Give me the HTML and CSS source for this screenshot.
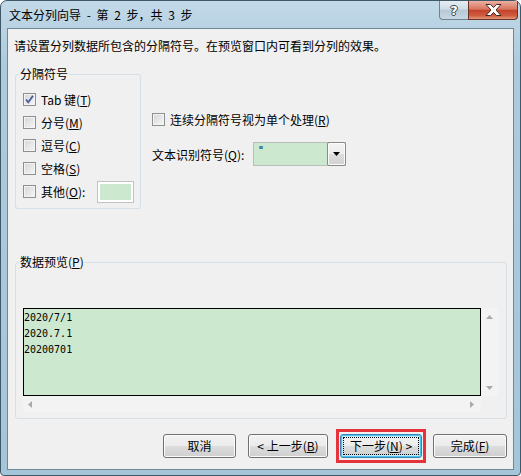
FILE: index.html
```html
<!DOCTYPE html>
<html lang="zh-CN">
<head>
<meta charset="utf-8">
<title>文本分列向导</title>
<link rel="stylesheet" href="styles.css">
</head>
<body>
<div class="window">
  <div class="titlebar">
    <span class="title">文本分列向导 - 第 2 步，共 3 步</span>
    <div class="caption-btns">
      <span class="cbtn help">?</span>
      <span class="cbtn close"><svg width="17" height="12" viewBox="0 0 17 12"><path d="M1 0.5h4.6l2.9 3 2.9-3H16l-5 5.5 5 5.5h-4.6L8.5 8.5l-2.9 3H1l5-5.5z" fill="#fff" stroke="#4a241c" stroke-width="1"/></svg></span>
    </div>
  </div>
  <div class="client">
    <p class="intro">请设置分列数据所包含的分隔符号。在预览窗口内可看到分列的效果。</p>
    <div class="top-row">
      <fieldset class="group delims">
        <legend>分隔符号</legend>
        <div class="checklist">
          <div class="row"><span class="cb"><svg width="11" height="11" viewBox="0 0 11 11"><path d="M2 5.5l2.3 2.8L9 1.8" fill="none" stroke="#4a5d9c" stroke-width="1.9"/></svg></span><span>Tab 键(<u>T</u>)</span></div>
          <div class="row"><span class="cb"></span><span>分号(<u>M</u>)</span></div>
          <div class="row"><span class="cb"></span><span>逗号(<u>C</u>)</span></div>
          <div class="row"><span class="cb"></span><span>空格(<u>S</u>)</span></div>
          <div class="row"><span class="cb"></span><span>其他(<u>O</u>):</span><span class="other-input"></span></div>
        </div>
      </fieldset>
      <div class="options">
        <div class="row consec"><span class="cb"></span><span>连续分隔符号视为单个处理(<u>R</u>)</span></div>
        <div class="qualifier">
          <span class="qlabel">文本识别符号(<u>Q</u>):</span>
          <div class="combo">
            <span class="combo-val">"</span>
            <span class="combo-btn"><svg width="7" height="4" viewBox="0 0 7 4"><path d="M0 0h7L3.5 4z" fill="#000"/></svg></span>
          </div>
        </div>
      </div>
    </div>
    <fieldset class="group preview">
      <legend>数据预览(<u>P</u>)</legend>
      <div class="scroller">
        <div class="grid">2020/7/1<br>2020.7.1<br>20200701</div>
        <div class="vscroll">
          <svg width="7" height="4" viewBox="0 0 7 4"><path d="M3.5 0L7 4H0z" fill="#a9a9a9"/></svg>
          <svg width="7" height="4" viewBox="0 0 7 4"><path d="M0 0h7L3.5 4z" fill="#a9a9a9"/></svg>
        </div>
        <div class="hscroll">
          <svg width="4" height="7" viewBox="0 0 4 7"><path d="M4 0v7L0 3.5z" fill="#a9a9a9"/></svg>
          <svg width="4" height="7" viewBox="0 0 4 7"><path d="M0 0v7l4-3.5z" fill="#a9a9a9"/></svg>
        </div>
        <div class="corner"></div>
      </div>
    </fieldset>
    <div class="buttons">
      <button class="btn cancel">取消</button>
      <button class="btn back">&lt; 上一步(<u>B</u>)</button>
      <span class="highlight"><button class="btn next default"><span class="focus">下一步(<u>N</u>) &gt;</span></button></span>
      <button class="btn finish">完成(<u>F</u>)</button>
    </div>
  </div>
</div>
</body>
</html>
```
FILE: styles.css
```css
html, body {
  margin: 0;
  padding: 0;
}
body {
  width: 521px;
  height: 476px;
  overflow: hidden;
  background: #ffffff;
  font-family: "Noto Sans CJK SC", "Noto Sans", sans-serif;
  font-size: 12px;
  color: #000;
}
.window {
  box-sizing: border-box;
  width: 521px;
  height: 476px;
  border: 1px solid #3f5868;
  border-radius: 7px 7px 4px 4px;
  background: linear-gradient(#c2d9e8, #aecbdd 60px, #a5c5d9);
  display: flex;
  flex-direction: column;
}
.titlebar {
  height: 27px;
  flex-shrink: 0;
  display: flex;
  align-items: flex-start;
}
.title {
  margin: 5px 0 0 8px;
  line-height: 17px;
  word-spacing: 3px;
}
.caption-btns {
  margin-left: auto;
  margin-right: 2px;
  display: flex;
}
.cbtn {
  box-sizing: border-box;
  height: 19px;
  display: flex;
  align-items: center;
  justify-content: center;
}
.help {
  width: 29px;
  border: 1px solid #6d8493;
  border-top: none;
  border-right: none;
  border-radius: 0 0 0 4px;
  background: linear-gradient(#e6eef4, #d0dde6 45%, #b6c9d6 50%, #c7d8e3);
  color: #fff;
  font-family: "DejaVu Sans", sans-serif;
  font-weight: bold;
  font-size: 13px;
  text-shadow: 1px 0 #34434c, -1px 0 #34434c, 0 1px #34434c, 0 -1px #34434c;
}
.close {
  width: 50px;
  border: 1px solid #6b3428;
  border-top: none;
  border-radius: 0 0 4px 0;
  background: linear-gradient(#eab0a2, #d8765f 45%, #c5432b 52%, #cf5a3e 80%, #e5977a);
}
.client {
  flex: 1;
  margin: 0 6px 5px 6px;
  border: 1px solid #6f8898;
  background: #f0f0f0;
}
.intro {
  margin: 9px 0 0 6px;
  line-height: 16px;
}
.top-row {
  display: flex;
  align-items: flex-start;
  margin-top: 12px;
}
fieldset.group {
  margin: 0 0 0 7px;
  padding: 0;
  min-width: 0;
  border: 1px solid #d5dfe5;
  border-radius: 3px;
}
fieldset.group legend {
  margin-left: 3px;
  padding: 0 1px;
  line-height: 16px;
}
.delims {
  box-sizing: border-box;
  width: 126px;
}
.checklist {
  padding: 6px 0 5px 7px;
}
.row {
  display: flex;
  align-items: center;
  height: 23px;
}
.cb {
  box-sizing: border-box;
  width: 13px;
  height: 13px;
  flex-shrink: 0;
  margin-right: 5px;
  border: 1px solid #8e8f8f;
  background: linear-gradient(135deg, #d3d5d8, #f7f7f7);
  box-shadow: inset 0 0 0 1px #f4f4f4;
  display: flex;
  align-items: center;
  justify-content: center;
}
.other-input {
  box-sizing: border-box;
  width: 37px;
  height: 22px;
  margin-left: auto;
  margin-right: 6px;
  border: 1px solid #c3c3c3;
  background: #cce8cf;
  box-shadow: inset 0 0 0 2px #ffffff;
}
.options {
  margin-left: 11px;
  padding-top: 45px;
  display: flex;
  flex-direction: column;
}
.consec {
  height: 16px;
}
.qualifier {
  display: flex;
  align-items: center;
  height: 24px;
  margin-top: 15px;
}
.qlabel {
  width: 101px;
}
.combo {
  box-sizing: border-box;
  width: 93px;
  height: 24px;
  border: 1px solid #bcbcbc;
  background: #cce8cf;
  display: flex;
}
.combo-val {
  padding: 2px 0 0 4px;
  font-family: "DejaVu Sans Mono", monospace;
  font-size: 10px;
  line-height: 12px;
}
.combo-btn {
  box-sizing: border-box;
  width: 19px;
  height: 24px;
  margin: -1px -1px -1px auto;
  border: 1px solid #8a8a8a;
  border-radius: 2px;
  background: linear-gradient(#f4f4f4, #ececec 50%, #dedede 50%, #d2d2d2);
  box-shadow: inset 0 0 0 1px #fbfbfb;
  display: flex;
  align-items: center;
  justify-content: center;
}
.preview {
  margin: 45px 6px 0 7px !important;
}
.scroller {
  margin: 38px 0 6px 7px;
  width: 475px;
  display: grid;
  grid-template-columns: 458px 17px;
  grid-template-rows: 88px 16px;
}
.grid {
  box-sizing: border-box;
  border: 1px solid #000;
  background: #cce8cf;
  padding-top: 1px;
  font-family: "DejaVu Sans Mono", monospace;
  font-size: 10px;
  line-height: 16px;
  overflow: hidden;
}
.vscroll {
  background: #f3f3f3;
  display: flex;
  flex-direction: column;
  align-items: center;
  justify-content: space-between;
  padding: 7px 0 6px;
}
.hscroll {
  background: #f3f3f3;
  display: flex;
  align-items: center;
  justify-content: space-between;
  padding: 0 7px 0 5px;
}
.corner {
  background: #f0f0f0;
}
.buttons {
  display: flex;
  justify-content: flex-end;
  align-items: center;
  height: 34px;
  margin-top: 10px;
  padding-right: 6px;
}
.btn {
  box-sizing: border-box;
  height: 24px;
  padding: 0;
  border: 1px solid #707070;
  border-radius: 3px;
  background: linear-gradient(#f2f2f2, #ebebeb 50%, #dddddd 50%, #cfcfcf);
  box-shadow: inset 0 0 0 1px #fbfbfb;
  font-family: "Noto Sans CJK SC", "Noto Sans", sans-serif;
  font-size: 12px;
  line-height: 16px;
  color: #000;
}
.cancel {
  width: 73px;
  margin-right: 12px;
}
.back {
  width: 80px;
  margin-right: 8px;
}
.finish {
  width: 74px;
}
.highlight {
  display: flex;
  padding: 2px 1px;
  border: 3px solid #e5323b;
  margin-right: 7px;
}
.next.default {
  width: 82px;
  padding: 2px;
  display: flex;
  border-color: #3c7fb1;
  box-shadow: inset 0 0 0 1px #48c6f3, inset 0 0 0 2px #c3eafb;
}
.focus {
  flex: 1;
  border: 1px dotted #000;
  display: flex;
  align-items: center;
  justify-content: center;
}
```
